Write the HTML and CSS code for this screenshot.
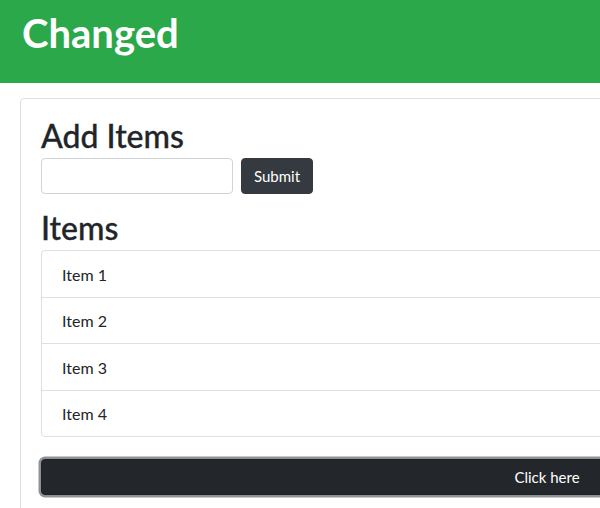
FILE: index.html
```html
<!DOCTYPE html>
<html lang="en">
<head>
<meta charset="utf-8">
<title>Changed</title>
<link rel="stylesheet" href="styles.css">
</head>
<body>
<header class="site-header">
  <h1 class="site-title">Changed</h1>
</header>
<main class="page">
  <section class="card">
    <h2 class="section-title">Add Items</h2>
    <form class="add-form">
      <input class="text-input" type="text">
      <button class="btn btn-submit" type="button">Submit</button>
    </form>
    <h2 class="section-title items-title">Items</h2>
    <ul class="item-list">
      <li class="item">Item 1</li>
      <li class="item">Item 2</li>
      <li class="item">Item 3</li>
      <li class="item">Item 4</li>
    </ul>
    <button class="btn btn-block" type="button">Click here</button>
  </section>
</main>
</body>
</html>
```
FILE: styles.css
```css
html, body {
  margin: 0;
  padding: 0;
  overflow: hidden;
}
body {
  font-family: "Lato", "Open Sans", sans-serif;
  font-size: 16px;
  line-height: 24px;
  color: #212529;
  background: #fff;
}
.site-header {
  background: #2ba84a;
  padding: 9px 22px 26px;
}
.site-title {
  margin: 0;
  font-size: 40px;
  line-height: 48px;
  font-weight: 700;
  color: #fff;
}
.page {
  padding: 15px 0 0 20px;
}
.card {
  width: 1054px;
  box-sizing: border-box;
  border: 1px solid rgba(0, 0, 0, 0.125);
  border-radius: 4px;
  padding: 18px 20px 20px;
  min-height: 500px;
}
.section-title {
  margin: 0 0 3px;
  font-size: 32px;
  line-height: 38px;
  font-weight: 500;
  -webkit-text-stroke: 0.3px #212529;
}
.items-title {
  margin-top: 15px;
}
.add-form {
  display: flex;
  gap: 8px;
}
.text-input {
  width: 192px;
  height: 36px;
  box-sizing: border-box;
  border: 1px solid #ced4da;
  border-radius: 4px;
  padding: 6px 12px;
  font: inherit;
}
.btn {
  font-family: inherit;
  font-size: 15px;
  line-height: 24px;
  color: #fff;
  border-radius: 4px;
  box-sizing: border-box;
  height: 36px;
  padding: 5px 11px;
  cursor: pointer;
}
.btn-submit {
  width: 72px;
  background: #343a40;
  border: 1px solid #343a40;
}
.item-list {
  list-style: none;
  margin: 0;
  padding: 0;
  border: 1px solid rgba(0, 0, 0, 0.125);
  border-radius: 4px;
}
.item {
  padding: 11.5px 20px 10px;
}
.item + .item {
  border-top: 1px solid rgba(0, 0, 0, 0.125);
}
.btn-block {
  display: block;
  width: 100%;
  margin-top: 22px;
  background: #23272b;
  border: 1px solid #1d2124;
  box-shadow: 0 0 0 2.5px rgba(130, 134, 138, 0.9);
  text-align: center;
}
```
